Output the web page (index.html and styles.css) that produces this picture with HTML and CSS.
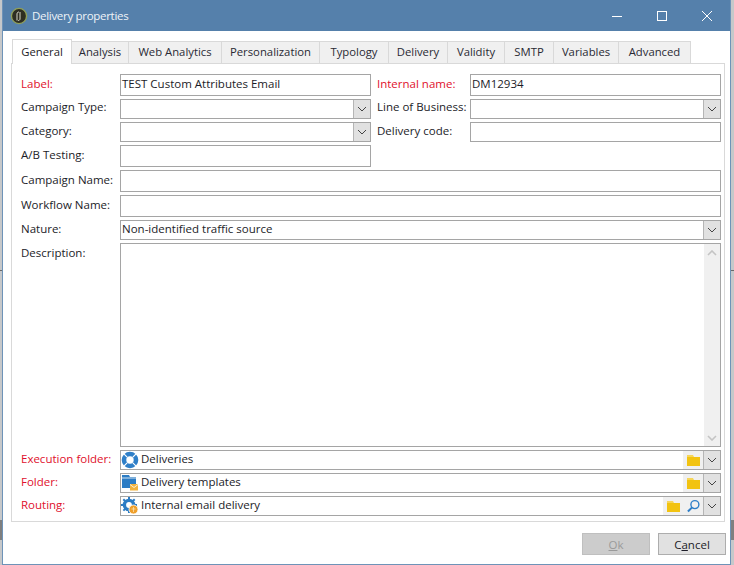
FILE: index.html
```html
<!DOCTYPE html>
<html lang="en">
<head>
<meta charset="utf-8">
<title>Delivery properties</title>
<link rel="stylesheet" href="styles.css">
</head>
<body>
<div class="window">
  <header class="titlebar">
    <svg class="app-icon" width="18" height="18" viewBox="0 0 18 18"><circle cx="9" cy="9" r="7.6" fill="#2e2e22" stroke="#8f9f5a" stroke-width="1.4"/><path d="M7 13.500V7c0-1.500 1-2 2-2M10 5v7c0 1-1 1.500-2 1.500" fill="none" stroke="#d8d8c8" stroke-width="1"/></svg>
    <span class="title">Delivery properties</span>
    <div class="controls">
      <svg width="10" height="10" viewBox="0 0 10 10"><path d="M0 5.500h10" stroke="#fff" fill="none"/></svg>
      <svg width="10" height="10" viewBox="0 0 10 10"><rect x=".5" y=".5" width="9" height="9" stroke="#fff" fill="none"/></svg>
      <svg width="10" height="10" viewBox="0 0 10 10"><path d="M0 0l10 10M10 0L0 10" stroke="#fff" fill="none"/></svg>
    </div>
  </header>
  <div class="content">
    <nav class="tabs">
      <span class="tab active w60">General</span>
      <span class="tab w57">Analysis</span>
      <span class="tab w93">Web Analytics</span>
      <span class="tab w98">Personalization</span>
      <span class="tab w69">Typology</span>
      <span class="tab w59">Delivery</span>
      <span class="tab w57">Validity</span>
      <span class="tab w49">SMTP</span>
      <span class="tab w65">Variables</span>
      <span class="tab w72">Advanced</span>
    </nav>
    <section class="panel">
      <form class="form">
        <label class="req tall">Label:</label>
        <div class="field"><span class="grow">TEST Custom Attributes Email</span></div>
        <label class="req tall second">Internal name:</label>
        <div class="field"><span class="grow">DM12934</span></div>

        <label class="up">Campaign Type:</label>
        <div class="field select"><span class="grow"></span><span class="arrow"><svg width="10" height="6" viewBox="0 0 10 6"><path d="M1 1l4 4 4-4" fill="none" stroke="#444"/></svg></span></div>
        <label class="second up">Line of Business:</label>
        <div class="field select"><span class="grow"></span><span class="arrow"><svg width="10" height="6" viewBox="0 0 10 6"><path d="M1 1l4 4 4-4" fill="none" stroke="#444"/></svg></span></div>

        <label>Category:</label>
        <div class="field select"><span class="grow"></span><span class="arrow"><svg width="10" height="6" viewBox="0 0 10 6"><path d="M1 1l4 4 4-4" fill="none" stroke="#444"/></svg></span></div>
        <label class="second">Delivery code:</label>
        <div class="field"></div>

        <label class="tall">A/B Testing:</label>
        <div class="field"></div>
        <span class="blank"></span>
        <span class="blank"></span>

        <label class="tall">Campaign Name:</label>
        <div class="field wide"></div>

        <label class="tall">Workflow Name:</label>
        <div class="field wide"></div>

        <label>Nature:</label>
        <div class="field select wide"><span class="grow">Non-identified traffic source</span><span class="arrow"><svg width="10" height="6" viewBox="0 0 10 6"><path d="M1 1l4 4 4-4" fill="none" stroke="#444"/></svg></span></div>

        <label class="tall">Description:</label>
        <div class="field wide memo">
          <span class="grow"></span>
          <div class="scrollbar">
            <svg width="10" height="6" viewBox="0 0 10 6"><path d="M1 5l4-4 4 4" fill="none" stroke="#c4c4c4" stroke-width="1.6"/></svg>
            <svg width="10" height="6" viewBox="0 0 10 6"><path d="M1 1l4 4 4-4" fill="none" stroke="#c4c4c4" stroke-width="1.6"/></svg>
          </div>
        </div>

        <label class="req">Execution folder:</label>
        <div class="field select wide link">
          <svg class="lead" width="18" height="18" viewBox="0 0 18 18"><circle cx="9" cy="9" r="6" fill="none" stroke="#2f7fc8" stroke-width="4.600"/><path d="M9 0v5M9 13v5M0 9h5M13 9h5" stroke="#fff" stroke-width="1.2" transform="rotate(45 9 9)"/></svg>
          <span class="grow">Deliveries</span>
          <span class="tools"><svg width="13" height="13" viewBox="0 0 13 13"><path d="M0 1h6l1 2H0z" fill="#f6d65a"/><path d="M0 3h13v9H0z" fill="#f2c311"/></svg></span>
          <span class="arrow"><svg width="10" height="6" viewBox="0 0 10 6"><path d="M1 1l4 4 4-4" fill="none" stroke="#444"/></svg></span>
        </div>

        <label class="req">Folder:</label>
        <div class="field select wide link">
          <svg class="lead" width="18" height="18" viewBox="0 0 18 18"><path d="M1 1h7l1 2h6v11H1z" fill="#2c7cc4"/><path d="M1 4h14" stroke="#fff" stroke-width=".8"/><rect x="9" y="10" width="8" height="6.500" fill="#f3b33c"/><path d="M9 10.500l4 3 4-3" fill="none" stroke="#fff" stroke-width=".8"/></svg>
          <span class="grow">Delivery templates</span>
          <span class="tools"><svg width="13" height="13" viewBox="0 0 13 13"><path d="M0 1h6l1 2H0z" fill="#f6d65a"/><path d="M0 3h13v9H0z" fill="#f2c311"/></svg></span>
          <span class="arrow"><svg width="10" height="6" viewBox="0 0 10 6"><path d="M1 1l4 4 4-4" fill="none" stroke="#444"/></svg></span>
        </div>

        <label class="req">Routing:</label>
        <div class="field select wide link">
          <svg class="lead" width="18" height="18" viewBox="0 0 18 18"><circle cx="8" cy="8" r="4.600" fill="none" stroke="#2c7cc4" stroke-width="3.400"/><path d="M8 0v16M0 8h16M2.300 2.300l11.400 11.400M13.700 2.300L2.300 13.700" stroke="#2c7cc4" stroke-width="2" stroke-dasharray="2.500 11 2.500"/><circle cx="12.500" cy="12.500" r="4.500" fill="#ef9f2b" stroke="#fff" stroke-width=".8"/><path d="M10.500 12h4M12.500 10v5" stroke="#fbe2b0" stroke-width=".8"/></svg>
          <span class="grow">Internal email delivery</span>
          <span class="tools two">
            <svg width="13" height="13" viewBox="0 0 13 13"><path d="M0 1h6l1 2H0z" fill="#f6d65a"/><path d="M0 3h13v9H0z" fill="#f2c311"/></svg>
            <svg width="13" height="14" viewBox="0 0 14 14"><circle cx="8.500" cy="5.500" r="4.300" fill="none" stroke="#2f7fc8" stroke-width="1.500"/><path d="M5.500 8.500L1 13" stroke="#2f7fc8" stroke-width="2.200"/></svg>
          </span>
          <span class="arrow"><svg width="10" height="6" viewBox="0 0 10 6"><path d="M1 1l4 4 4-4" fill="none" stroke="#444"/></svg></span>
        </div>
      </form>
    </section>
    <footer class="actions">
      <button type="button" class="btn" disabled><u>O</u>k</button>
      <button type="button" class="btn">C<u>a</u>ncel</button>
    </footer>
  </div>
</div>
</body>
</html>
```

FILE: styles.css
```css
* { box-sizing: border-box; }
html, body { margin: 0; height: 100%; }
body {
  width: 734px;
  height: 565px;
  overflow: hidden;
  background: linear-gradient(#c6c8ca 0 270px, #6a6a6a 270px 271px, #c6c8ca 271px 520px, #7f7f7f 520px 540px, #c6c8ca 540px);
  font-family: "Open Sans", "Noto Sans", sans-serif;
  font-size: 11.5px;
  color: #1c1c28;
}
.window {
  margin-left: 2px;
  width: 729px;
  height: 565px;
  display: flex;
  flex-direction: column;
  background: #fff;
  border: 1px solid #6e93b8;
  border-top: 0;
}
.titlebar {
  height: 31px;
  flex: none;
  display: flex;
  align-items: center;
  background: #5580ab;
  color: #eef3f8;
  padding-left: 7px;
}
.title { margin-left: 4px; letter-spacing: -.3px; }
.controls {
  margin-left: auto;
  display: flex;
  gap: 35px;
  padding-right: 18px;
}
.content {
  flex: 1;
  display: flex;
  flex-direction: column;
  padding: 8px 5px 0 8px;
}
.tabs {
  display: flex;
  height: 24px;
  padding-left: 1px;
  position: relative;
  z-index: 1;
  font-size: 11.3px;
}
.tab {
  height: 23px;
  margin-top: 2px;
  padding-bottom: 2px;
  display: flex;
  align-items: center;
  justify-content: center;
  background: #f0f0f0;
  border: 1px solid #d9d9d9;
  border-left-width: 0;
  color: #2a2a34;
}
.tab.active {
  height: 25px;
  margin-top: 0;
  background: #fff;
  border-left-width: 1px;
  border-bottom: 0;
  color: #1c1c28;
}
.w60 { width: 60px; }
.w57 { width: 57px; }
.w93 { width: 93px; }
.w98 { width: 98px; }
.w69 { width: 69px; }
.w59 { width: 59px; }
.w49 { width: 49px; }
.w65 { width: 65px; }
.w72 { width: 72px; }
.panel {
  height: 459px;
  border: 1px solid #d9d9d9;
  padding: 10px 3px 0 9px;
}
.form {
  display: grid;
  grid-template-columns: 99px 251px 99px 251px;
  grid-template-rows: 22px 20px 20px 22px 22px 22px 20px 204px 20px 20px 20px;
  row-gap: 3px;
}
.form label {
  line-height: 17px;
  white-space: nowrap;
}
.form label.tall { line-height: 19px; }
.form label.up { line-height: 15px; }
.form label.second { padding-left: 6px; }
.req { color: #e0102c; }
.field {
  border: 1px solid #a5a5a5;
  background: #fff;
  display: flex;
  align-items: center;
  padding-left: 1px;
  white-space: nowrap;
  min-width: 0;
}
.wide { grid-column: 2 / 5; }
.grow { flex: 1; margin-bottom: 4px; }
.arrow {
  width: 17px;
  align-self: stretch;
  flex: none;
  display: flex;
  align-items: center;
  justify-content: center;
  background: #e1e1e1;
  border-left: 1px solid #b5b5b5;
}
.memo { align-items: stretch; }
.scrollbar {
  width: 16px;
  background: #f0f0f0;
  display: flex;
  flex-direction: column;
  align-items: center;
  justify-content: space-between;
  padding: 6px 0 5px;
}
.link { padding-left: 0; }
.lead { flex: none; margin-right: 2px; }
.tools {
  align-self: stretch;
  width: 20px;
  background: #f0f0f0;
  flex: none;
  display: flex;
  align-items: center;
  justify-content: center;
}
.tools.two { width: 40px; gap: 7px; }
.actions {
  display: flex;
  justify-content: flex-end;
  gap: 8px;
  padding-top: 11px;
  margin-right: -1px;
}
.btn {
  width: 68px;
  height: 22px;
  padding: 0;
  font: inherit;
  background: #e1e1e1;
  border: 1px solid #adadad;
  color: #1c1c28;
}
.btn:disabled {
  background: #cccccc;
  border-color: #bfbfbf;
  color: #9a9a9a;
}
```
